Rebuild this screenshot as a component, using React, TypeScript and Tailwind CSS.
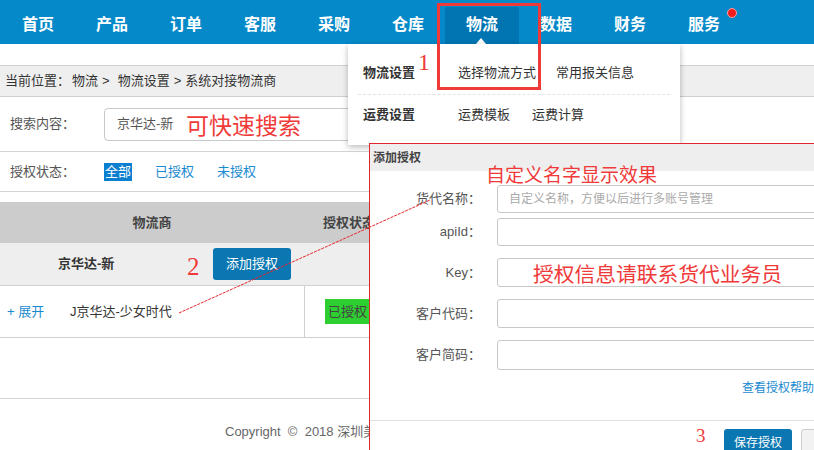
const navItems = ['首页', '产品', '订单', '客服', '采购', '仓库', '物流', '数据', '财务', '服务']

function FormRow({ label, className, placeholder }: { label: string; className: string; placeholder?: string }) {
  return (
    <div className={'flex items-center ' + className}>
      <label className="w-[111px] shrink-0 text-right text-[13px] text-[#555]">{label}</label>
      <div className="ml-[16px] h-full w-[340px] shrink-0 rounded-[3px] border border-[#c8c8c8] bg-white pl-[11px] flex items-center text-[12px] text-[#aaa]">
        {placeholder}
      </div>
    </div>
  )
}

export default function App() {
  return (
    <div className="relative h-[450px] w-[814px] overflow-hidden bg-white font-['Liberation_Sans','Noto_Sans_CJK_SC',sans-serif] text-[13px] text-[#333]">
      {/* top nav */}
      <nav className="flex h-[44px] bg-[#0689c9] pl-[1px]">
        {navItems.map(n => (
          <div
            key={n}
            className={
              'relative mt-[7px] flex h-[37px] w-[74px] items-center justify-center pb-[1px] text-[16px] font-bold text-white ' +
              (n === '物流' ? 'rounded-t-[2px] bg-[#0075b2]' : '')
            }
          >
            {n}
            {n === '物流' && (
              <span className="absolute bottom-0 left-[31px] h-0 w-0 border-x-[5px] border-b-[6px] border-x-transparent border-b-white" />
            )}
            {n === '服务' && (
              <span className="absolute left-[60px] top-[1px] h-[10px] w-[10px] rounded-full border border-[#f7a0a0] bg-[#f21d1d]" />
            )}
          </div>
        ))}
      </nav>

      <div className="h-[21px]" />

      {/* breadcrumb */}
      <div className="flex h-[32px] items-center border-y border-[#d0d0d0] bg-[#efefef] pl-[5px] text-[13px] text-[#333]">
        <span>当前位置：</span>
        <span className="ml-[2px]">物流</span>
        <span className="mx-[4px]">&gt;</span>
        <span className="ml-[4px]">物流设置</span>
        <span className="mx-[4px]">&gt;</span>
        <span>系统对接物流商</span>
      </div>

      {/* search */}
      <div className="flex h-[55px] items-center border-b border-[#d4d4d4] pl-[10px]">
        <span className="w-[94px] text-[#555]">搜索内容：</span>
        <div className="flex h-[33px] w-[300px] items-center rounded-[4px] border border-[#c9c9c9] pl-[12px] text-[#555]">京华达-新</div>
      </div>

      {/* status filter */}
      <div className="flex h-[40px] items-center border-b border-[#d4d4d4] pl-[10px]">
        <span className="w-[94px] text-[#555]">授权状态：</span>
        <span className="bg-[#0b7fcf] px-[1px] leading-[18px] text-white">全部</span>
        <span className="ml-[23px] text-[#1a8ad0]">已授权</span>
        <span className="ml-[23px] text-[#1a8ad0]">未授权</span>
      </div>

      {/* table */}
      <div className="mt-[10px]">
        <div className="flex h-[41px] items-center bg-[#cccccc] font-bold text-[#444]">
          <div className="w-[304px] text-center">物流商</div>
          <div className="pl-[19px]">授权状态</div>
        </div>
        <div className="flex h-[43px] items-center border-b border-[#d0d0d0] bg-[#eeeeee]">
          <div className="w-[213px] pl-[58px] font-bold text-[#333]">京华达-新</div>
          <button className="h-[32px] w-[78px] rounded-[3px] bg-[#0a77b2] text-[13px] text-white">添加授权</button>
        </div>
        <div className="flex h-[52px] border-b border-[#d0d0d0]">
          <div className="flex w-[305px] items-center border-r border-[#d0d0d0] pl-[7px]">
            <span className="w-[63px] text-[#1a8ad0]">+ 展开</span>
            <span className="text-[#333]">J京华达-少女时代</span>
          </div>
          <div className="flex items-center pl-[20px]">
            <span className="flex h-[25px] w-[45px] items-center justify-center bg-[#2ecf31] text-[#444]">已授权</span>
          </div>
        </div>
        <div className="h-[61px] border-b border-[#d4d4d4]" />
        <div className="pl-[225px] pt-[23px] text-[13px] text-[#666]">Copyright&nbsp; ©&nbsp; 2018 深圳美</div>
      </div>

      {/* nav dropdown */}
      <div className="absolute left-[348px] top-[44px] h-[101px] w-[332px] bg-white px-[15px] pt-[8px] shadow-[0_2px_6px_rgba(0,0,0,0.28)]">
        <div className="flex h-[43px] items-center border-b border-dashed border-[#e4e4e4] -mx-[5px] px-[5px]">
          <span className="w-[95px] font-bold text-[#333]">物流设置</span>
          <span className="w-[98px]">选择物流方式</span>
          <span>常用报关信息</span>
        </div>
        <div className="flex h-[40px] items-center">
          <span className="w-[95px] font-bold text-[#333]">运费设置</span>
          <span className="w-[74px]">运费模板</span>
          <span>运费计算</span>
        </div>
      </div>

      {/* dialog */}
      <div className="absolute left-[369px] top-[143px] h-[330px] w-[480px] border border-[#e0262c] bg-white">
        <div className="flex h-[27px] items-center bg-[#eeeeee] pl-[3px] text-[12px] font-bold text-[#444]">添加授权</div>
        <FormRow label="货代名称：" className="mt-[14px] h-[28px]" placeholder="自定义名称，方便以后进行多账号管理" />
        <FormRow label="apiId：" className="mt-[5px] h-[28px]" />
        <FormRow label="Key：" className="mt-[12px] h-[29px]" />
        <FormRow label="客户代码：" className="mt-[12px] h-[29px]" />
        <FormRow label="客户简码：" className="mt-[12px] h-[30px]" />
        <div className="mt-[10px] h-[16px] pl-[372px] text-[12px] leading-[16px] whitespace-nowrap text-[#1a8ad0]">查看授权帮助?</div>
        <div className="mt-[24px] flex border-t border-[#e0e0e0] pl-[354px] pt-[8px]">
          <button className="h-[28px] w-[68px] shrink-0 rounded-[3px] bg-[#0a77b2] text-[12px] text-white">保存授权</button>
          <button className="ml-[9px] h-[28px] w-[72px] shrink-0 rounded-[3px] border border-[#ccc] bg-[#f2f2f2] pl-[26px] text-left text-[12px] text-[#333]">取消</button>
        </div>
      </div>

      {/* annotations */}
      <div className="absolute left-[437px] top-[3px] h-[87px] w-[104px] border-[3px] border-[#f03a3a]" />
      <span className="absolute left-[418px] top-[50px] font-['Liberation_Serif',serif] text-[24px] leading-none text-[#f03a3a]">1</span>
      <span className="absolute left-[187px] top-[254px] font-['Liberation_Serif',serif] text-[25px] leading-none text-[#f03a3a]">2</span>
      <span className="absolute left-[696px] top-[426px] font-['Liberation_Serif',serif] text-[19px] leading-none text-[#f03a3a]">3</span>
      <span className="absolute left-[186px] top-[115px] text-[23px] leading-none whitespace-nowrap text-[#f03a3a]">可快速搜索</span>
      <span className="absolute left-[486px] top-[166px] text-[19px] leading-none whitespace-nowrap text-[#f03a3a]">自定义名字显示效果</span>
      <span className="absolute left-[533px] top-[265px] text-[20.75px] leading-none whitespace-nowrap text-[#f03a3a]">授权信息请联系货代业务员</span>
      <svg className="pointer-events-none absolute left-0 top-0" width="814" height="450">
        <line x1="179" y1="313" x2="430" y2="200" stroke="#e8262c" strokeWidth="1" strokeDasharray="3 1" />
      </svg>
    </div>
  )
}
